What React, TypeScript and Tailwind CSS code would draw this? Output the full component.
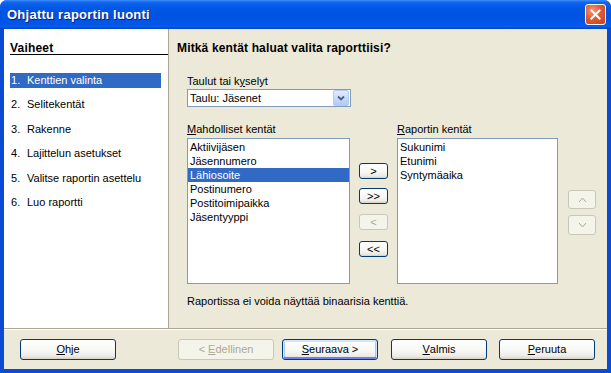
import React from "react";

type BtnProps = {
  children: React.ReactNode;
  className?: string;
  disabled?: boolean;
  focused?: boolean;
};

function XPButton({ children, className = "", disabled, focused }: BtnProps) {
  const base =
    "flex items-center justify-center rounded-[3px] border leading-[13px] text-[11px] shrink-0";
  const state = disabled
    ? "border-[#C9C7BA] bg-[#F5F4EA] text-[#ACA899]"
    : "border-[#003C74] bg-[linear-gradient(180deg,#FFFFFF_0%,#F7F7F4_55%,#ECEBE6_85%,#D6D0C5_100%)] text-black";
  const focus = focused ? "shadow-[inset_0_1px_0_1px_#CEE7FF,inset_0_-1px_0_1px_#6982EE,inset_1px_0_0_1px_#A9C7F5,inset_-1px_0_0_1px_#A9C7F5]" : "";
  return <div className={`${base} ${state} ${focus} ${className}`}>{children}</div>;
}

const steps = [
  "Kenttien valinta",
  "Selitekentät",
  "Rakenne",
  "Lajittelun asetukset",
  "Valitse raportin asettelu",
  "Luo raportti",
];

const available = [
  "Aktiivijäsen",
  "Jäsennumero",
  "Lähiosoite",
  "Postinumero",
  "Postitoimipaikka",
  "Jäsentyyppi",
];

const chosen = ["Sukunimi", "Etunimi", "Syntymäaika"];

export default function App() {
  return (
    <div className="w-[611px] h-[373px] bg-white">
      <div className="w-[611px] h-[373px] flex flex-col bg-[#0A4BD6] rounded-t-[7px] overflow-hidden font-['Liberation_Sans',Arial,sans-serif] text-[11px] text-black">
        {/* Title bar */}
        <div className="h-[29px] shrink-0 flex items-center justify-between pl-[7px] pr-[5px] bg-[linear-gradient(180deg,#3D8EF8_0%,#1266EE_8%,#0058E6_25%,#0053E1_55%,#0058E8_85%,#0A5CEA_92%,#0040C4_100%)]">
          <div className="text-white font-bold text-[13px] tracking-[0.25px] leading-[16px] [text-shadow:1px_1px_0_#0A1C7E] pt-[1px]">
            Ohjattu raportin luonti
          </div>
          <div className="w-[21px] h-[21px] rounded-[3px] border border-white bg-[radial-gradient(circle_at_35%_30%,#F29A7C_0%,#E25A30_45%,#C8401C_100%)] flex items-center justify-center">
            <svg width="11" height="11" viewBox="0 0 11 11">
              <path d="M1.5 1.5 L9.5 9.5 M9.5 1.5 L1.5 9.5" stroke="white" strokeWidth="2" strokeLinecap="square" />
            </svg>
          </div>
        </div>

        {/* Body */}
        <div className="flex-1 mx-[4px] mb-[4px] bg-[#ECE9D8] flex flex-col">
          <div className="h-[299px] flex shrink-0">
            {/* Left steps panel */}
            <div className="w-[165px] h-full bg-white border-r border-[#ACA899] shrink-0 pt-[13px]">
              <div className="ml-[6px] h-[12px] border-b border-black font-bold text-[12px] tracking-[0.2px] leading-[12px] box-content">
                Vaiheet
              </div>
              <div className="flex flex-col gap-[9.4px] mt-[18px]">
                {steps.map((s, i) => (
                  <div
                    key={s}
                    className={`ml-[6px] w-[151px] h-[15px] flex items-center leading-[13px] ${
                      i === 0 ? "bg-[#316AC5] text-white" : "text-black"
                    }`}
                  >
                    <span className="w-[17px] pl-[1px]">{i + 1}.</span>
                    <span>{s}</span>
                  </div>
                ))}
              </div>
            </div>

            {/* Right content */}
            <div className="flex-1 pl-[8px] pt-[13px]">
              <div className="font-bold text-[12px] tracking-[0.15px] leading-[12px] h-[12px]">
                Mitkä kentät haluat valita raporttiisi?
              </div>
              <div className="ml-[10px]">
                <div className="mt-[21px] leading-[13px] h-[13px]">
                  Taulut tai k<span className="underline">y</span>selyt
                </div>
                <div className="mt-[1px] w-[164px] h-[18px] bg-white border border-[#7F9DB9] flex items-center justify-between">
                  <span className="pl-[2px] leading-[13px]">Taulu: Jäsenet</span>
                  <div className="w-[16px] h-[16px] mr-[1px] rounded-[2px] border border-[#B6CAF6] bg-[linear-gradient(180deg,#E2EBFE_0%,#C6D6FC_60%,#B3C8F8_100%)] flex items-center justify-center">
                    <svg width="8" height="6" viewBox="0 0 8 6">
                      <path d="M1 1.5 L4 4.5 L7 1.5" stroke="#4D6185" strokeWidth="1.8" fill="none" />
                    </svg>
                  </div>
                </div>

                <div className="flex mt-[16px]">
                  {/* available list */}
                  <div className="w-[163px] shrink-0">
                    <div className="leading-[13px] h-[13px]">
                      <span className="underline">M</span>ahdolliset kentät
                    </div>
                    <div className="mt-[2px] h-[146px] bg-white border border-[#7F9DB9] pt-[1px]">
                      {available.map((a, i) => (
                        <div
                          key={a}
                          className={`h-[14px] leading-[14px] pl-[2px] ${
                            i === 2 ? "bg-[#316AC5] text-white" : ""
                          }`}
                        >
                          {a}
                        </div>
                      ))}
                    </div>
                  </div>

                  {/* move buttons */}
                  <div className="ml-[9px] w-[29px] shrink-0 pt-[40px] flex flex-col">
                    <XPButton className="w-[29px] h-[16px]">&gt;</XPButton>
                    <XPButton className="w-[29px] h-[16px] mt-[9px]">&gt;&gt;</XPButton>
                    <XPButton className="w-[29px] h-[16px] mt-[10px]" disabled>
                      &lt;
                    </XPButton>
                    <XPButton className="w-[29px] h-[16px] mt-[11px]">&lt;&lt;</XPButton>
                  </div>

                  {/* chosen list */}
                  <div className="ml-[9px] w-[161px] shrink-0">
                    <div className="leading-[13px] h-[13px]">
                      <span className="underline">R</span>aportin kentät
                    </div>
                    <div className="mt-[2px] h-[146px] bg-white border border-[#7F9DB9] pt-[1px]">
                      {chosen.map((c) => (
                        <div key={c} className="h-[14px] leading-[14px] pl-[2px]">
                          {c}
                        </div>
                      ))}
                    </div>
                  </div>

                  {/* up/down */}
                  <div className="ml-[10px] w-[28px] shrink-0 pt-[67px] flex flex-col">
                    <XPButton className="w-[28px] h-[19px]" disabled>
                      <svg width="9" height="6" viewBox="0 0 9 6">
                        <path d="M1 5 L4.5 1 L8 5" stroke="#ACA899" strokeWidth="1" fill="none" />
                      </svg>
                    </XPButton>
                    <XPButton className="w-[28px] h-[20px] mt-[6px]" disabled>
                      <svg width="9" height="6" viewBox="0 0 9 6">
                        <path d="M1 1 L4.5 5 L8 1" stroke="#ACA899" strokeWidth="1" fill="none" />
                      </svg>
                    </XPButton>
                  </div>
                </div>

                <div className="mt-[11px] leading-[13px]">
                  Raportissa ei voida näyttää binaarisia kenttiä.
                </div>
              </div>
            </div>
          </div>

          {/* separator */}
          <div className="h-[2px] shrink-0 border-t border-b border-t-[#ACA899] border-b-white" />

          {/* footer */}
          <div className="flex-1 flex items-start pt-[9px] pl-[16px]">
            <XPButton className="w-[96px] h-[21px]">
              <span className="underline">O</span>hje
            </XPButton>
            <XPButton className="w-[96px] h-[21px] ml-[62px]" disabled>
              &lt;&nbsp;<span className="underline">E</span>dellinen
            </XPButton>
            <XPButton className="w-[96px] h-[21px] ml-[8px]" focused>
              <span className="underline">S</span>euraava &gt;
            </XPButton>
            <XPButton className="w-[96px] h-[21px] ml-[13px]">
              <span className="underline">V</span>almis
            </XPButton>
            <XPButton className="w-[96px] h-[21px] ml-[12px]">
              <span className="underline">P</span>eruuta
            </XPButton>
          </div>
        </div>
      </div>
    </div>
  );
}
